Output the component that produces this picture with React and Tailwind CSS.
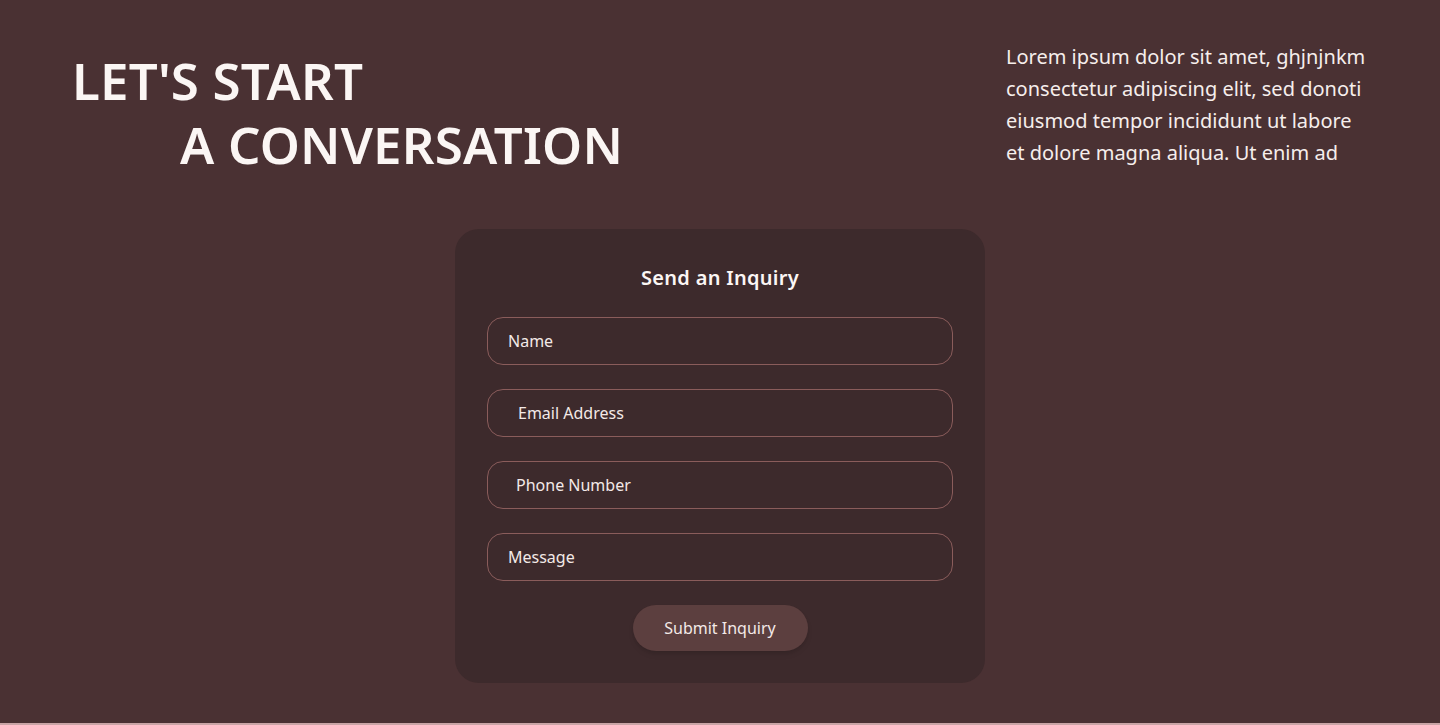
import { useState } from "react";

const fields = [
  { name: "name", label: "Name", pad: "pl-5" },
  { name: "email", label: "Email Address", pad: "pl-[30px]" },
  { name: "phone", label: "Phone Number", pad: "pl-[28px]" },
  { name: "message", label: "Message", pad: "pl-5" },
];

const App = () => {
  const [form, setForm] = useState({ name: "", email: "", phone: "", message: "" });

  const handleSubmit = (e) => {
    e.preventDefault();
  };

  return (
    <div className="min-h-screen bg-[#c9a5a6] font-['Noto_Sans',sans-serif]">
      <section className="h-[723px] bg-[#4a3133] text-[#fbf6f4]">
        {/* Heading + intro */}
        <div className="flex justify-between pl-[72px] pr-[72px] pt-[48px]">
          <h1 className="text-[51px] font-semibold leading-[64px] tracking-[0.2px]">
            <span className="block">LET'S START</span>
            <span className="block pl-[108px]">A CONVERSATION</span>
          </h1>
          <p className="w-[362px] -mt-[7px] text-[20px] leading-[32px] text-[#f6eeec]">
            Lorem ipsum dolor sit amet, ghjnjnkm consectetur adipiscing elit, sed donoti eiusmod tempor incididunt ut labore et dolore magna aliqua. Ut enim ad
          </p>
        </div>

        {/* Inquiry card */}
        <div className="flex justify-center pt-[53px]">
          <form
            onSubmit={handleSubmit}
            className="w-[530px] rounded-[24px] bg-[#3d2a2c] px-8 pt-[34px] pb-8 flex flex-col items-center"
          >
            <h2 className="text-[20px] font-semibold leading-[30px] tracking-[0.3px] mb-[24px]">Send an Inquiry</h2>
            <div className="w-full flex flex-col gap-6">
              {fields.map((f) => (
                <input
                  key={f.name}
                  type="text"
                  placeholder={f.label}
                  value={form[f.name]}
                  onChange={(e) => setForm({ ...form, [f.name]: e.target.value })}
                  className={`h-12 w-full rounded-[16px] border border-[#8a5c5b] bg-transparent ${f.pad} pr-5 text-[16px] text-[#f3e9e7] placeholder:text-[#f3e9e7] focus:outline-none`}
                />
              ))}
            </div>
            <button
              type="submit"
              className="mt-6 h-[46px] w-[175px] rounded-full bg-[#5c3f3f] text-[16px] text-[#f3e9e7] shadow-md"
            >
              Submit Inquiry
            </button>
          </form>
        </div>
      </section>
    </div>
  );
};

export default App;
